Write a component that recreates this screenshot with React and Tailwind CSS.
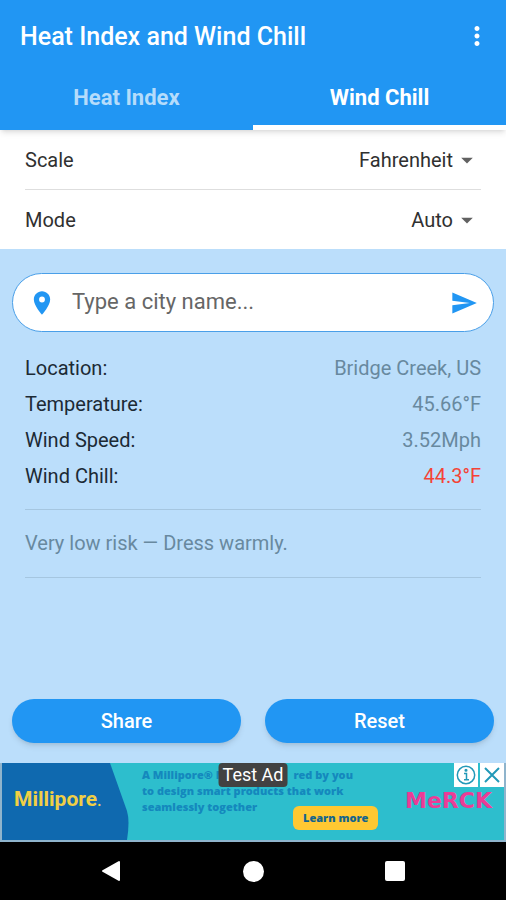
import React, { useState } from 'react';
import { MdMoreVert, MdLocationOn, MdSend, MdArrowDropDown } from 'react-icons/md';

const tabs = ['Heat Index', 'Wind Chill'];

const readings = [
  { label: 'Location:', value: 'Bridge Creek, US', color: 'text-[#68899f]' },
  { label: 'Temperature:', value: '45.66°F', color: 'text-[#68899f]' },
  { label: 'Wind Speed:', value: '3.52Mph', color: 'text-[#68899f]' },
  { label: 'Wind Chill:', value: '44.3°F', color: 'text-[#f44336]' },
];

const Header = ({ active, onChange }) => (
  <header className="relative z-10 bg-[#2196f3] text-white shadow-md">
    <div className="flex h-18 items-center justify-between pl-5 pr-3.5">
      <h1 className="text-[25px] font-medium">Heat Index and Wind Chill</h1>
      <button type="button" aria-label="More options">
        <MdMoreVert className="size-[30px]" />
      </button>
    </div>
    <div role="tablist" className="grid grid-cols-2">
      {tabs.map((tab) => (
        <button
          key={tab}
          type="button"
          role="tab"
          aria-selected={tab === active}
          onClick={() => onChange(tab)}
          className={
            tab === active
              ? 'h-[58px] border-b-[5px] border-white text-[22px] font-bold'
              : 'h-[58px] border-b-[5px] border-transparent text-[22px] font-bold text-[#b5dcfb]'
          }
        >
          {tab}
        </button>
      ))}
    </div>
  </header>
);

const SettingRow = ({ id, label, options }) => (
  <div className="flex h-[59px] items-center justify-between">
    <label htmlFor={id}>{label}</label>
    <div className="relative flex items-center">
      <select id={id} className="field-sizing-content appearance-none bg-transparent pr-7 text-right outline-none">
        {options.map((option) => (
          <option key={option}>{option}</option>
        ))}
      </select>
      <MdArrowDropDown className="pointer-events-none absolute right-0 size-7 text-[#616161]" />
    </div>
  </div>
);

const SearchBar = () => (
  <form
    onSubmit={(e) => e.preventDefault()}
    className="flex h-[59px] items-center rounded-full border border-[#4a9fe8] bg-white px-[15px] text-[#2196f3]"
  >
    <MdLocationOn className="size-7 shrink-0" />
    <input
      type="text"
      aria-label="City name"
      placeholder="Type a city name..."
      className="ml-4 min-w-0 flex-1 text-[22px] text-[#212121] outline-none placeholder:text-[#666666]"
    />
    <button type="submit" aria-label="Search">
      <MdSend className="size-7" />
    </button>
  </form>
);

const AdBanner = () => (
  <section aria-label="Advertisement" className="relative border-x-2 border-b-2 border-[#8fb4cc] bg-[#2dbecd]">
    <div className="flex h-[77px]">
      <div className="relative w-32 shrink-0">
        <svg viewBox="0 0 128 77" className="absolute inset-0 size-full" aria-hidden="true">
          <path d="M0 0H108L125 48Q128 58 125 77H0Z" fill="#0f69af" />
        </svg>
        <p className="relative pl-3 pt-[22px] text-[21px] font-bold text-[#f0cf45]">
          Millipore<span className="text-sm">.</span>
        </p>
      </div>
      <div className="ml-3 flex w-[211px] shrink-0 flex-col pt-1 font-['Open_Sans'] text-[11px] leading-4 font-extrabold whitespace-nowrap text-[#1488bd]">
        <p className="flex justify-between">
          <span>A Millipore® M</span>
          <span>red by you</span>
        </p>
        <p>to design smart products that work</p>
        <p>seamlessly together</p>
      </div>
      <p className="ml-auto self-center pr-3 font-['DejaVu_Sans'] text-[22px] font-bold text-[#eb3c96]">MeRCK</p>
    </div>
    <a
      href="#learn"
      className="absolute bottom-2.5 left-[291px] rounded-md bg-[#ffc832] px-2.5 font-['Open_Sans'] text-[11px] leading-6 font-extrabold text-[#14648c]"
    >
      Learn more
    </a>
    <span className="absolute top-0 left-1/2 -translate-x-1/2 rounded bg-[#424242] px-1 text-lg leading-6 whitespace-nowrap text-white">
      Test Ad
    </span>
    <div className="absolute top-0 right-0 flex gap-0.5 text-[#2299b8]">
      <button type="button" aria-label="Ad information" className="bg-white p-0.5">
        <svg viewBox="0 0 20 20" className="size-5" fill="none" stroke="currentColor" strokeWidth="1.5">
          <circle cx="10" cy="10" r="8.7" />
          <path d="M8 8.5h2.5v6M8 14.7h5" />
          <circle cx="10" cy="5.3" r="0.8" fill="currentColor" />
        </svg>
      </button>
      <button type="button" aria-label="Close ad" className="bg-white p-0.5">
        <svg viewBox="0 0 20 20" className="size-5" fill="none" stroke="currentColor" strokeWidth="2">
          <path d="M3 3l14 14M17 3L3 17" />
        </svg>
      </button>
    </div>
  </section>
);

const SystemNav = () => (
  <nav className="grid h-[58px] grid-cols-3 bg-black px-10 text-white">
    <button type="button" aria-label="Back" className="flex items-center justify-center">
      <svg viewBox="0 0 22 22" className="size-[22px]" fill="currentColor" stroke="currentColor" strokeLinejoin="round" strokeWidth="2">
        <path d="M3 11L19 2v18z" />
      </svg>
    </button>
    <button type="button" aria-label="Home" className="flex items-center justify-center">
      <span className="size-[21px] rounded-full bg-white" />
    </button>
    <button type="button" aria-label="Recent apps" className="flex items-center justify-center">
      <span className="size-5 rounded-xs bg-white" />
    </button>
  </nav>
);

export default function App() {
  const [active, setActive] = useState('Wind Chill');

  return (
    <div className="flex min-h-screen flex-col bg-[#bbdefb] font-[Roboto,sans-serif] text-xl text-[#1c2a35]">
      <Header active={active} onChange={setActive} />

      <section className="bg-white px-[25px] text-[#303030]">
        <SettingRow id="scale" label="Scale" options={['Fahrenheit', 'Celsius']} />
        <hr className="border-[#dedede]" />
        <SettingRow id="mode" label="Mode" options={['Auto', 'Manual']} />
      </section>

      <main className="flex flex-1 flex-col px-3 pt-6 pb-5">
        <SearchBar />

        <div className="px-[13px]">
          <dl className="pt-[18px] pb-[15px]">
            {readings.map(({ label, value, color }) => (
              <div key={label} className="flex h-9 items-center justify-between">
                <dt>{label}</dt>
                <dd className={color}>{value}</dd>
              </div>
            ))}
          </dl>
          <hr className="border-[#a5c6e0]" />
          <p className="py-5 leading-[27px] text-[#68899f]">Very low risk — Dress warmly.</p>
          <hr className="border-[#a5c6e0]" />
        </div>

        {/* Actions */}
        <div className="mt-auto grid grid-cols-2 gap-6">
          <button type="button" className="h-11 rounded-full bg-[#2196f3] font-medium text-white shadow-md">
            Share
          </button>
          <button type="button" className="h-11 rounded-full bg-[#2196f3] font-medium text-white shadow-md">
            Reset
          </button>
        </div>
      </main>

      <AdBanner />
      <SystemNav />
    </div>
  );
}
